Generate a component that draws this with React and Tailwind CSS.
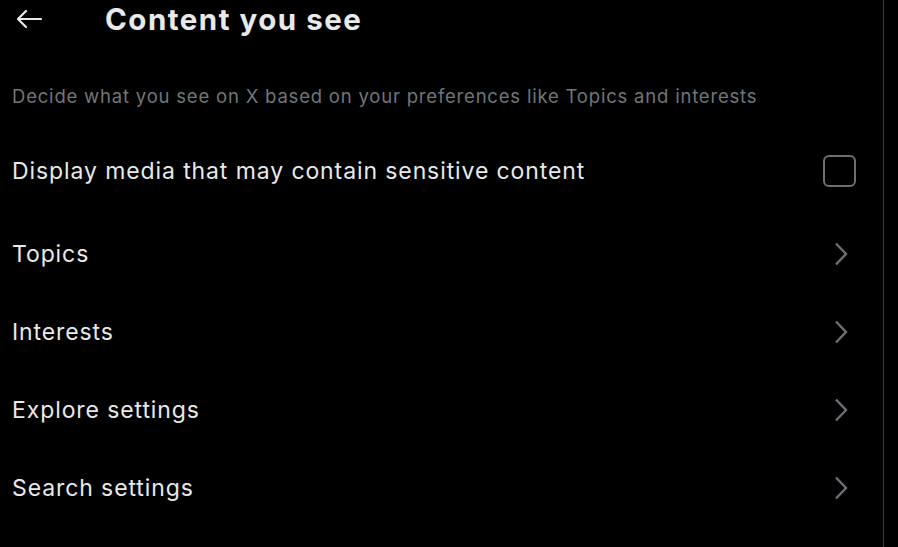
const rows = ["Topics", "Interests", "Explore settings", "Search settings"];

function Chevron() {
  return (
    <svg width="16" height="24" viewBox="0 0 16 24" fill="none" stroke="#6b7075" strokeWidth="2.4">
      <path d="M3 1.5 L13 12 L3 22.5" />
    </svg>
  );
}

function BackArrow() {
  return (
    <svg width="26" height="20" viewBox="0 0 26 20" fill="none" stroke="#e7e9ea" strokeWidth="2.2" strokeLinecap="round" strokeLinejoin="round">
      <path d="M2 10 H25 M10 2 L2 10 L10 18" />
    </svg>
  );
}

export default function App() {
  return (
    <div className="flex h-[547px] w-[898px] overflow-hidden bg-black text-[#e7e9ea]" style={{ fontFamily: "Inter, sans-serif" }}>
      <div className="w-[884px] border-r border-[#3a3d40]">
        {/* Header */}
        <div className="flex h-[38px] items-center">
          <div className="flex w-[105px] pl-[16px]">
            <BackArrow />
          </div>
          <h1 className="text-[29.5px] font-bold tracking-[1.5px]">Content you see</h1>
        </div>

        <p className="mt-[44px] px-3 text-[18.5px] leading-[28px] tracking-[0.8px] text-[#71767b]">
          Decide what you see on X based on your preferences like Topics and interests
        </p>

        <div className="mt-[36px] flex h-[50px] items-center justify-between pl-3 pr-[27px]">
          <span className="text-[23px] tracking-[0.9px]">Display media that may contain sensitive content</span>
          <span className="h-[32px] w-[33px] rounded-[6px] border-2 border-[#6b7075]" />
        </div>

        <div className="mt-[19px]">
          {rows.map((r) => (
            <div key={r} className="flex h-[78px] items-center justify-between pl-3 pr-[34px]">
              <span className="text-[23px] tracking-[0.9px]">{r}</span>
              <Chevron />
            </div>
          ))}
        </div>
      </div>
    </div>
  );
}
